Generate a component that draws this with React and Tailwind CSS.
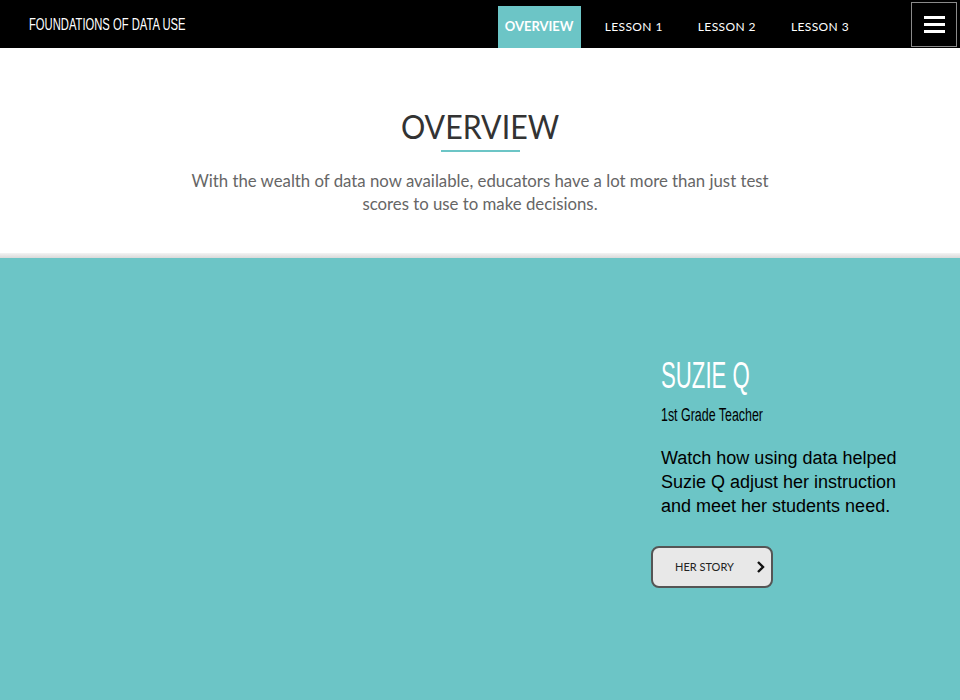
export default function App() {
  return (
    <div className="w-[960px] h-[700px] overflow-hidden bg-[#6cc5c6]">
      <header className="h-12 bg-black flex items-center">
        <div className="pl-[29px] pt-[2px]">
          <span className="inline-block text-white text-[17px] font-['Liberation_Sans',Arial,sans-serif] scale-x-[0.66] origin-left whitespace-nowrap">
            FOUNDATIONS OF DATA USE
          </span>
        </div>
        <nav className="ml-auto flex items-end h-12 self-stretch">
          <div className="h-[42px] w-[83px] bg-[#6cc5c6] flex items-center justify-center text-white text-[13px] font-bold font-['Lato',sans-serif]">
            OVERVIEW
          </div>
          <div className="h-[42px] flex items-center ml-[24px] text-white text-[12px] font-['Lato',sans-serif] tracking-[0.4px] whitespace-nowrap">
            LESSON 1
          </div>
          <div className="h-[42px] flex items-center ml-[35px] text-white text-[12px] font-['Lato',sans-serif] tracking-[0.4px] whitespace-nowrap">
            LESSON 2
          </div>
          <div className="h-[42px] flex items-center ml-[35px] text-white text-[12px] font-['Lato',sans-serif] tracking-[0.4px] whitespace-nowrap">
            LESSON 3
          </div>
        </nav>
        <div className="ml-[62px] mr-[3px] w-[46px] h-[45px] border border-[#8a8a8a] flex flex-col items-center justify-center gap-[4px]">
          <span className="block w-[21px] h-[3px] bg-white"></span>
          <span className="block w-[21px] h-[3px] bg-white"></span>
          <span className="block w-[21px] h-[3px] bg-white"></span>
        </div>
      </header>

      <section className="bg-white h-[205px] flex flex-col items-center pt-[59px]">
        <h1 className="text-[33px] leading-[38px] text-[#333333] font-['Lato',sans-serif]">
          <span className="inline-block scale-x-[0.92] whitespace-nowrap">OVERVIEW</span>
        </h1>
        <div className="mt-[5px] w-[79px] h-[2px] bg-[#6cc5c6]"></div>
        <p className="mt-[17px] w-[600px] text-center text-[16.8px] leading-[23px] text-[#666666] font-['Lato',sans-serif]">
          With the wealth of data now available, educators have a lot more than just test scores to use to make decisions.
        </p>
      </section>
      <div className="h-[5px] bg-gradient-to-b from-[#f4f4f4] to-[#d9d9d9]"></div>

      <section className="flex pt-[96px]">
        <div className="flex-1"></div>
        <div className="w-[309px] flex flex-col">
          <div className="pl-[10px]">
            <h2 className="text-white text-[37px] leading-[44px] font-['Liberation_Sans',Arial,sans-serif]">
              <span className="inline-block scale-x-[0.6] origin-left whitespace-nowrap">SUZIE Q</span>
            </h2>
            <div className="mt-[6px] text-black text-[18px] leading-[22px] font-['Liberation_Sans',Arial,sans-serif]">
              <span className="inline-block scale-x-[0.69] origin-left whitespace-nowrap">1st Grade Teacher</span>
            </div>
            <p className="mt-[20px] w-[250px] text-black text-[18px] leading-[24px] font-['Liberation_Sans',Arial,sans-serif]">
              Watch how using data helped Suzie Q adjust her instruction and meet her students need.
            </p>
          </div>
          <button className="mt-[28px] w-[122px] h-[42px] rounded-[8px] border-2 border-[#555555] bg-[#e8e8e8] flex items-center pl-[22px] pr-[6px] text-[#222222] text-[11px] font-['Lato',sans-serif]">
            <span>HER STORY</span>
            <svg className="ml-auto" width="10" height="14" viewBox="0 0 10 14">
              <path d="M3 2 L8 7 L3 12" fill="none" stroke="#111" strokeWidth="2.4" />
            </svg>
          </button>
        </div>
      </section>
    </div>
  );
}
